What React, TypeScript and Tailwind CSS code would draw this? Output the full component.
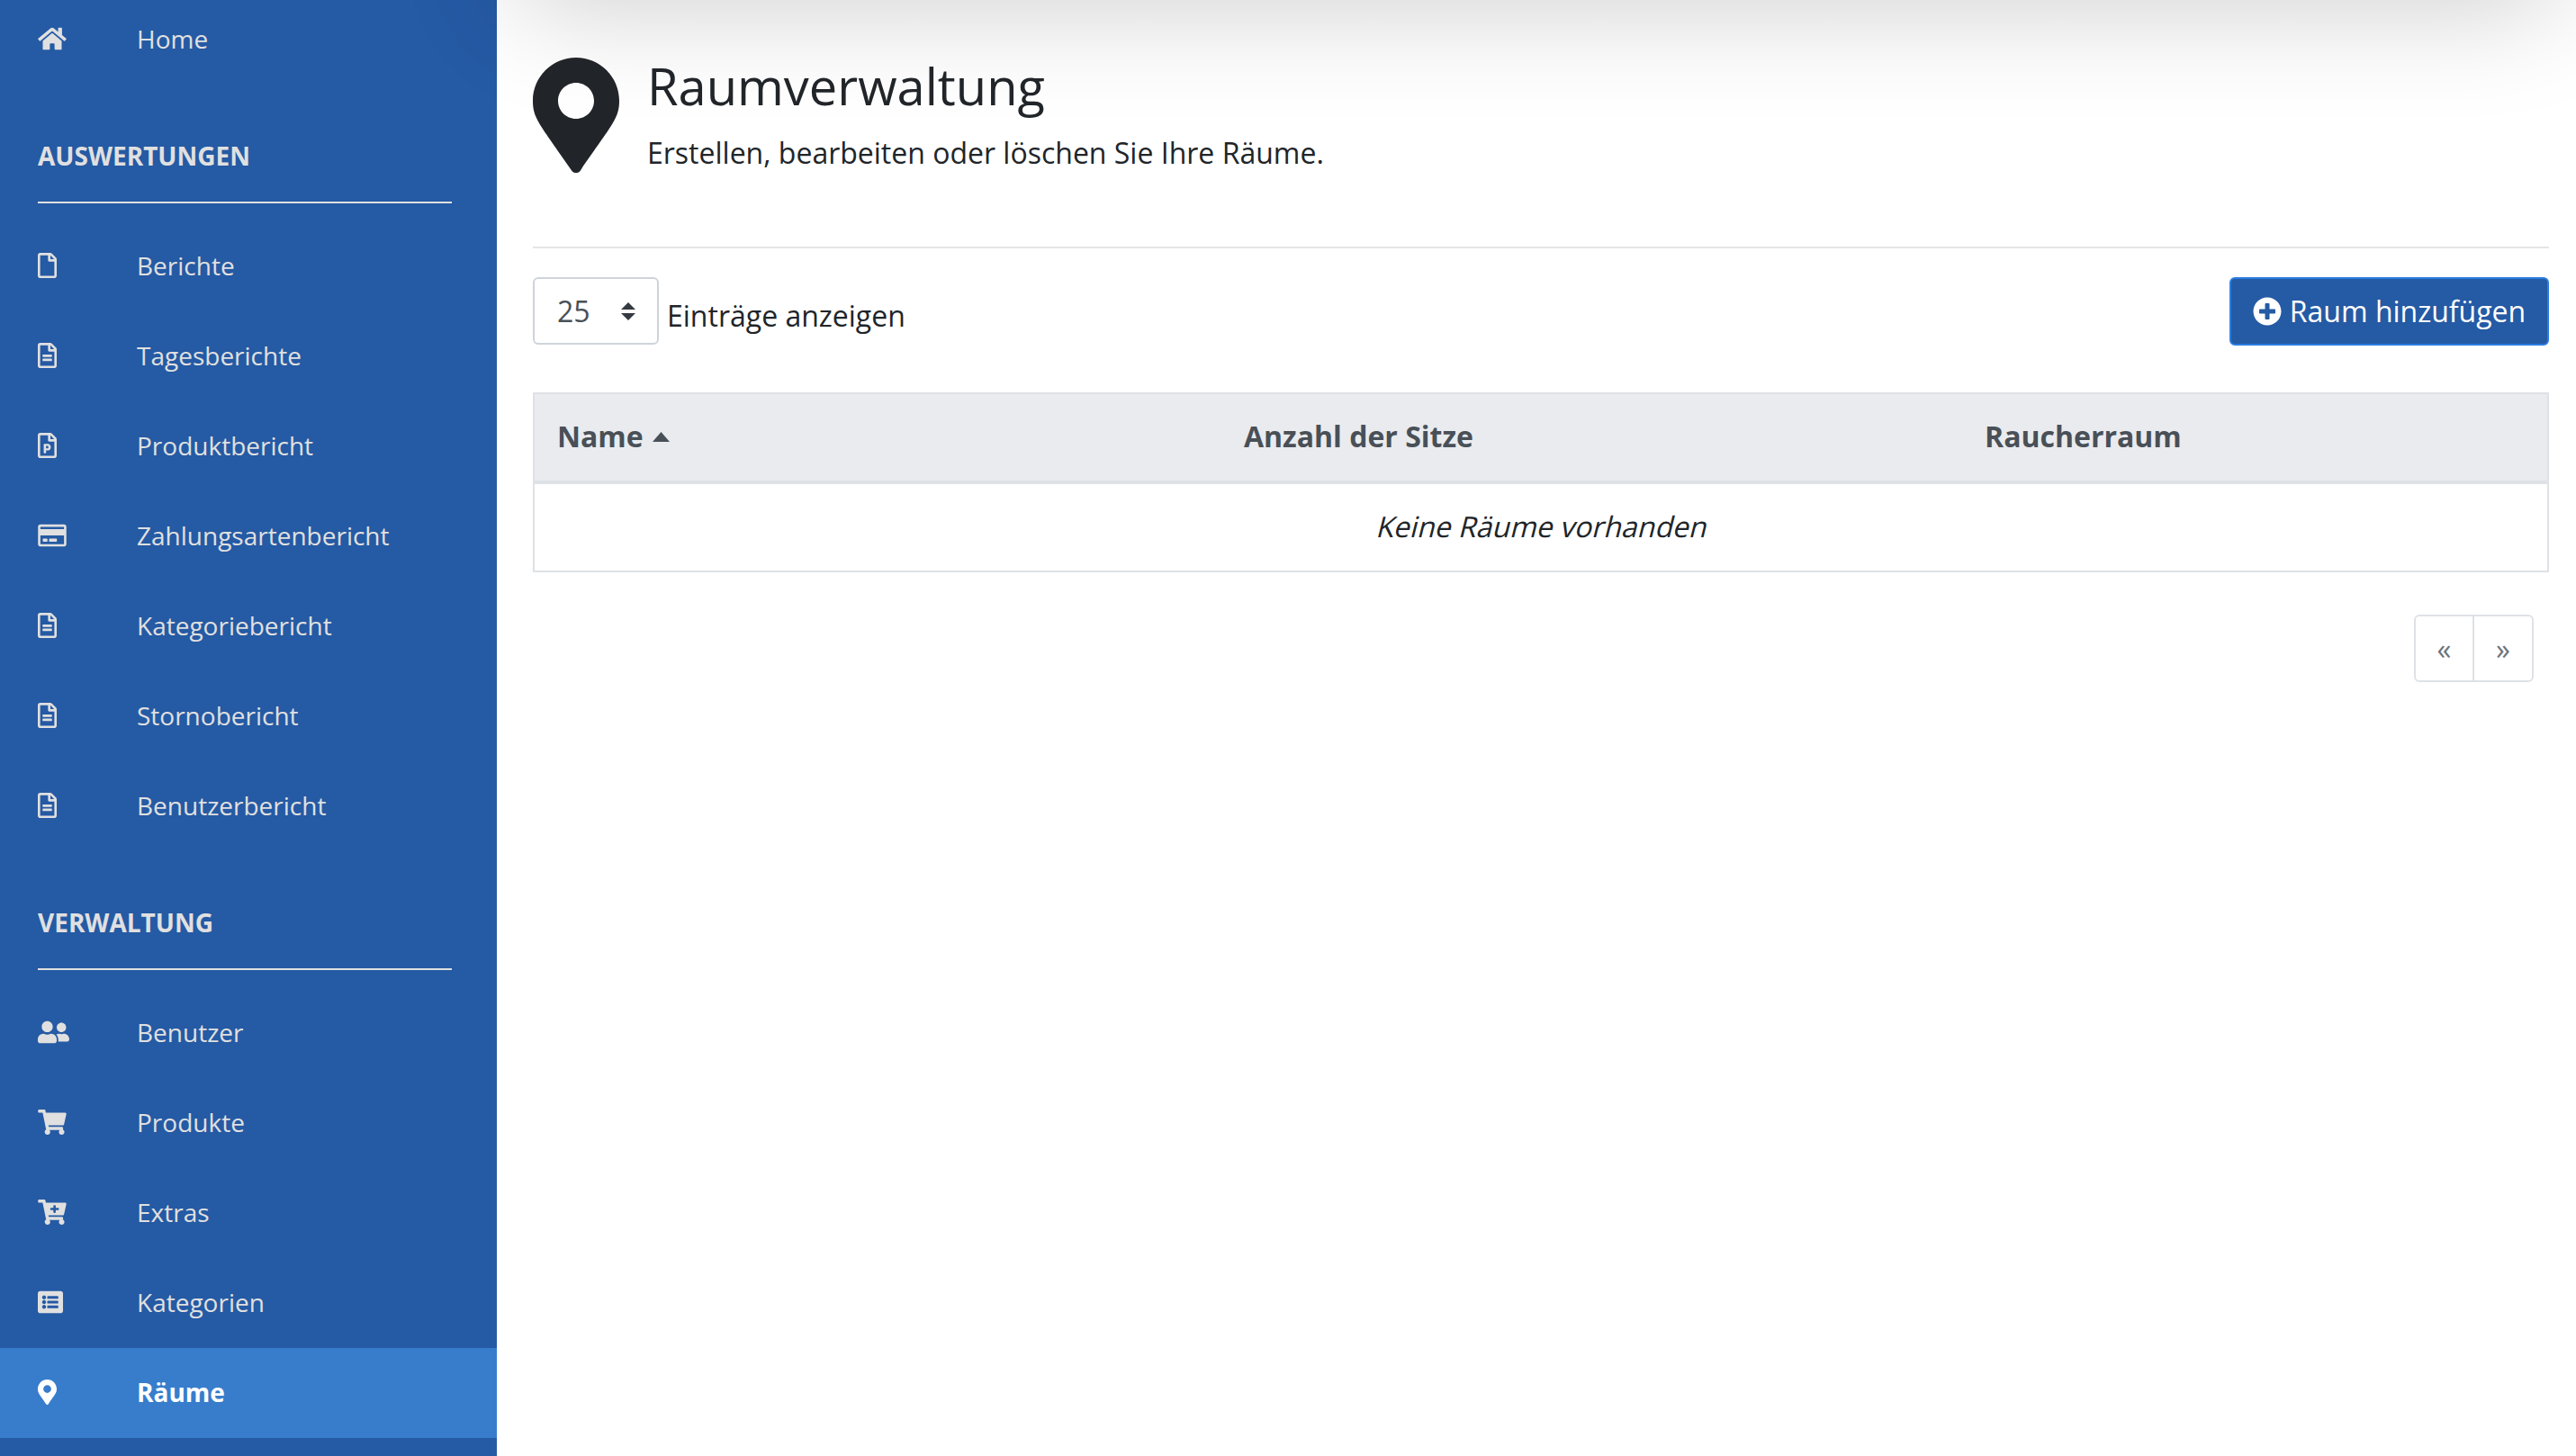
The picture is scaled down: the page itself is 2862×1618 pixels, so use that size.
import {
  FaCartPlus,
  FaHome,
  FaListAlt,
  FaMapMarkerAlt,
  FaPlusCircle,
  FaRegCreditCard,
  FaRegFile,
  FaRegFileAlt,
  FaRegFilePowerpoint,
  FaShoppingCart,
  FaUserFriends,
} from "react-icons/fa"
import type { IconType } from "react-icons"

interface NavItem {
  label: string
  icon: IconType
  iconClass: string
  active?: boolean
}

const reports: NavItem[] = [
  { label: "Berichte", icon: FaRegFile, iconClass: "h-[28px] w-[21px]" },
  { label: "Tagesberichte", icon: FaRegFileAlt, iconClass: "h-[28px] w-[21px]" },
  { label: "Produktbericht", icon: FaRegFilePowerpoint, iconClass: "h-[28px] w-[21px]" },
  { label: "Zahlungsartenbericht", icon: FaRegCreditCard, iconClass: "h-[28px] w-[32px]" },
  { label: "Kategoriebericht", icon: FaRegFileAlt, iconClass: "h-[28px] w-[21px]" },
  { label: "Stornobericht", icon: FaRegFileAlt, iconClass: "h-[28px] w-[21px]" },
  { label: "Benutzerbericht", icon: FaRegFileAlt, iconClass: "h-[28px] w-[21px]" },
]

const management: NavItem[] = [
  { label: "Benutzer", icon: FaUserFriends, iconClass: "h-[28px] w-[35px]" },
  { label: "Produkte", icon: FaShoppingCart, iconClass: "h-[28px] w-[32px]" },
  { label: "Extras", icon: FaCartPlus, iconClass: "h-[28px] w-[32px]" },
  { label: "Kategorien", icon: FaListAlt, iconClass: "h-[28px] w-[28px]" },
  { label: "Räume", icon: FaMapMarkerAlt, iconClass: "h-[28px] w-[21px]", active: true },
]

function SidebarLink({ item }: { item: NavItem }) {
  const Icon = item.icon
  return (
    <a
      className={
        item.active
          ? "flex h-[100px] items-center bg-[#377dcc] pb-[2px] pl-[42px] font-bold text-white"
          : "flex h-[100px] items-center pb-[2px] pl-[42px] text-[#e0e0e0]"
      }
    >
      <span className="w-[110px] shrink-0">
        <Icon className={item.iconClass} />
      </span>
      {item.label}
    </a>
  )
}

function SidebarHeading({ title, className }: { title: string; className: string }) {
  return (
    <div className={`ml-[42px] mr-[50px] border-b-2 border-[#e0e0e0] font-bold leading-[42px] text-[#e0e0e0] ${className}`}>
      {title}
    </div>
  )
}

export default function App() {
  return (
    <div className="flex h-[1618px] overflow-hidden bg-white font-['Open_Sans',sans-serif] text-[#212529]">
      <aside className="w-[552px] shrink-0 bg-[#255aa4] text-[28px]">
        <div className="-mt-[6px]">
          <SidebarLink item={{ label: "Home", icon: FaHome, iconClass: "h-[28px] w-[32px]" }} />
        </div>
        <SidebarHeading title="AUSWERTUNGEN" className="mt-[58px] mb-[20px] pb-[30px]" />
        {reports.map((item) => (
          <SidebarLink key={item.label} item={item} />
        ))}
        <SidebarHeading title="VERWALTUNG" className="mt-[58px] mb-[20px] pb-[30px]" />
        {management.map((item) => (
          <SidebarLink key={item.label} item={item} />
        ))}
      </aside>

      <main className="relative min-w-0 flex-1 pt-[64px] pr-[30px] pl-[40px] text-[32px]">
        {/* top bar sits above the fold, only its shadow is visible */}
        <div className="absolute -top-[300px] right-[23px] left-[23px] h-[300px] shadow-[0_0_130px_rgba(0,0,0,0.22)]" />

        <div className="relative border-b-2 border-[#e5e5e5] pb-[80px]">
          <div className="flex">
            <FaMapMarkerAlt className="h-[128px] w-[96px] shrink-0" />
            <div className="pl-[31px]">
              <h1 className="mb-[20px] text-[56px] leading-[62px]">Raumverwaltung</h1>
              <p className="leading-[48px]">Erstellen, bearbeiten oder löschen Sie Ihre Räume.</p>
            </div>
          </div>
        </div>

        <div className="relative mt-[32px] flex items-start justify-between">
          <div className="flex items-center">
            <div className="flex h-[75px] w-[140px] items-center justify-between rounded-[6px] border-2 border-[#ced4da] pr-[24px] pl-[25px] text-[#495057]">
              25
              <svg viewBox="0 0 16 20" className="h-[20px] w-[16px] fill-[#343a40]">
                <path d="M8 0 16 8H0zM8 20 0 12h16z" />
              </svg>
            </div>
            <span className="mt-[10px] ml-[9px]">Einträge anzeigen</span>
          </div>
          <button className="flex h-[76px] w-[355px] items-center justify-center gap-[9px] rounded-[6px] border-2 border-[#2a7de1] bg-[#255aa4] text-white">
            <FaPlusCircle className="h-[32px] w-[32px]" />
            Raum hinzufügen
          </button>
        </div>

        <table className="mt-[52px] w-full table-fixed border-2 border-[#dee2e6]">
          <colgroup>
            <col className="w-[763px]" />
            <col className="w-[823px]" />
            <col />
          </colgroup>
          <thead className="bg-[#e9ebef] text-left font-bold text-[#495057]">
            <tr className="border-b-4 border-[#dee2e6]">
              <th className="h-[99px] pb-[2px] pl-[25px]">
                <span className="flex items-center gap-[10px]">
                  Name
                  <svg viewBox="0 0 19 11" className="h-[11px] w-[19px] fill-[#495057]">
                    <path d="M9.5 0 19 11H0z" />
                  </svg>
                </span>
              </th>
              <th className="pb-[2px] pl-[26px]">Anzahl der Sitze</th>
              <th className="pb-[2px] pl-[26px]">Raucherraum</th>
            </tr>
          </thead>
          <tbody>
            <tr>
              <td colSpan={3} className="h-[99px] pb-[2px] pl-[6px] text-center">
                {/* the original's italic is a slanted upright face, so it runs wider than Open Sans Italic */}
                <span className="inline-block -skew-x-[14deg]">Keine Räume vorhanden</span>
              </td>
            </tr>
          </tbody>
        </table>

        <div className="relative mt-[47px] flex justify-end pr-[17px]">
          <div className="flex h-[75px] rounded-[6px] border-2 border-[#dee2e6] text-[#6c757d]">
            <span className="flex w-[65px] items-center justify-center border-r-2 border-[#dee2e6]">«</span>
            <span className="flex w-[64px] items-center justify-center">»</span>
          </div>
        </div>
      </main>
    </div>
  )
}
